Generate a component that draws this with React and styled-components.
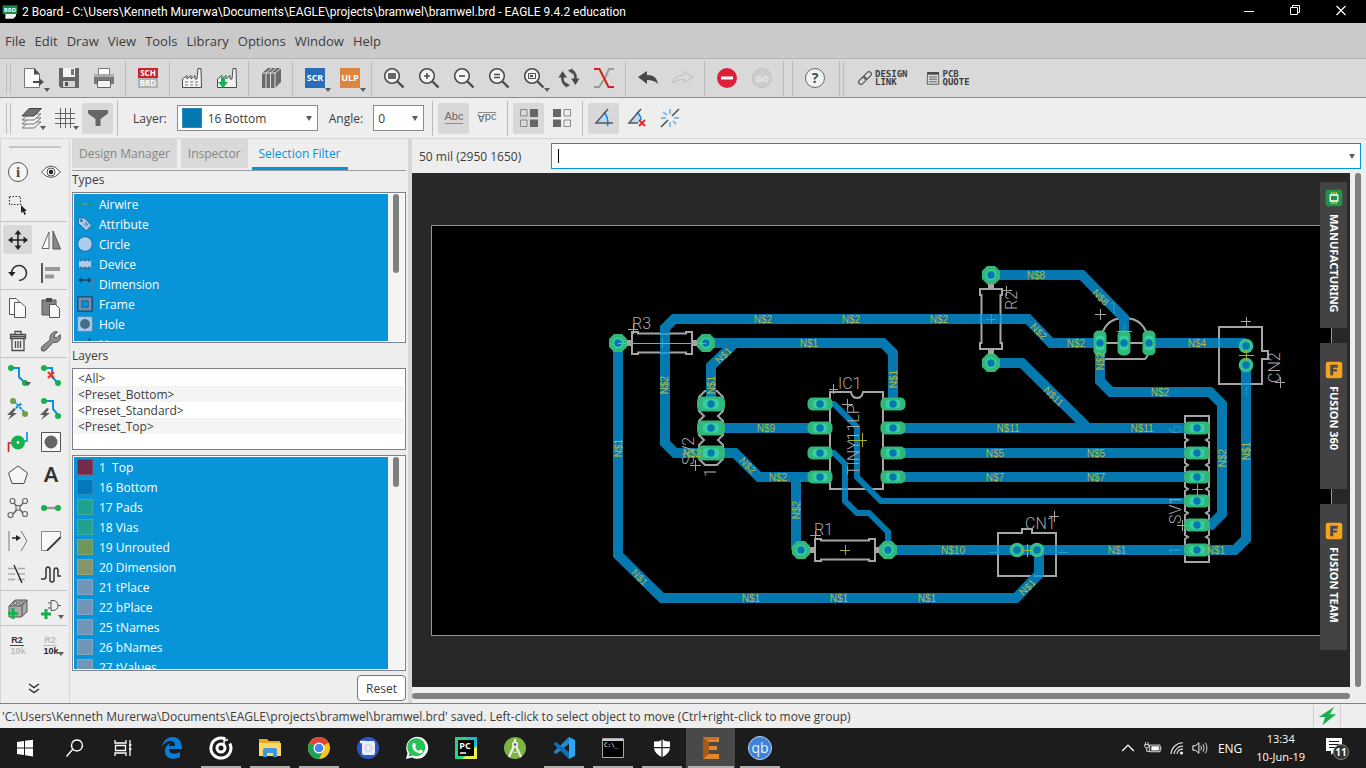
import React, { useState } from 'react'
import styled, { createGlobalStyle, css } from 'styled-components'

const GlobalStyle = createGlobalStyle`
    * {
        box-sizing: border-box;
    }

    body {
        margin: 0;
        overflow: hidden;
        font-family: "Open Sans", "Noto Sans", sans-serif;
        font-size: 12px;
        color: #3c3c3c;
    }

    button, input, select {
        font: inherit;
        color: inherit;
    }
`;

const Window = styled.div`
    display: flex;
    flex-direction: column;
    height: 100vh;
    background-color: #eeeeee;
`;

const TitleBar = styled.header`
    display: flex;
    align-items: center;
    flex: 0 0 23px;
    padding: 0 2px;
    background-color: #000;
    color: #fff;

    h1 {
        flex: 1;
        margin: 0 0 0 4px;
        font-family: Roboto, sans-serif;
        font-size: 12px;
        font-weight: 400;
        line-height: 16px;
    }
`;

const CaptionButton = styled.button`
    display: flex;
    align-items: center;
    justify-content: center;
    width: 46px;
    height: 23px;
    padding: 0 0 3px;
    border: 0;
    background: none;
`;

const MenuBar = styled.nav`
    display: flex;
    align-items: center;
    gap: 9px;
    flex: 0 0 36px;
    padding-left: 5px;
    background-color: #cacaca;
    border-bottom: 1px solid #b4b4b4;

    button {
        padding: 0;
        border: 0;
        background: none;
        font-size: 13px;
        line-height: 20px;
    }
`;

const ToolBar = styled.div`
    display: flex;
    align-items: center;
    flex: 0 0 ${({ $light }) => ($light ? '41px' : '39px')};
    padding-left: 6px;
    background-color: ${({ $light }) => ($light ? '#eeeeee' : '#d9d9d9')};
    border-bottom: 1px solid ${({ $light }) => ($light ? '#d6d6d6' : '#8c8c8c')};
`;

const Grip = styled.span`
    width: 5px;
    height: 31px;
    margin-right: 5px;
    border: solid #bdbdbd;
    border-width: 0 1px;
`;

const Divider = styled.span`
    width: 1px;
    height: 35px;
    margin: 0 ${({ $gap }) => $gap || '4px'};
    background-color: #bbbbbb;
`;

const ToolButton = styled.button`
    position: relative;
    display: flex;
    align-items: center;
    justify-content: center;
    flex: none;
    width: ${({ $size }) => $size || '35px'};
    height: ${({ $size }) => $size || '35px'};
    padding: 0;
    border: 0;
    border-radius: 2px;
    background: none;

    ${({ $on }) => $on && css`
        background-color: #d8d8d8;
    `}

    ${({ $menu }) => $menu && css`
        &::after {
            content: "";
            position: absolute;
            right: 1px;
            bottom: 4px;
            border: solid transparent;
            border-width: 4px 3px 0;
            border-top-color: #5c5c5c;
        }
    `}
`;

const Narrow = styled.div`
    display: flex;
    justify-content: center;
    gap: 2px;
`;

const LinkButton = styled.button`
    display: flex;
    align-items: center;
    gap: 2px;
    margin: 0 7px 0 10px;
    padding: 0;
    border: 0;
    background: none;
    text-align: left;
    font: 700 9px/8px "DejaVu Sans Mono", monospace;
    white-space: pre;
`;

const Field = styled.label`
    margin: 0 10px 0 11px;
`;

const SelectBox = styled.div`
    position: relative;
    display: flex;
    align-items: center;
    gap: 6px;
    width: ${({ $width }) => $width};
    height: 26px;
    padding-left: 4px;
    background-color: #fff;
    border: 1px solid #8a8a8a;

    select {
        flex: 1;
        min-width: 0;
        height: 24px;
        padding: 0 2px 0 0;
        border: 0;
        background: none;
        appearance: none;
        outline: 0;
    }

    &::after {
        content: "";
        position: absolute;
        right: 5px;
        top: 10px;
        border: solid transparent;
        border-width: 5px 3px 0;
        border-top-color: #5c5c5c;
    }
`;

const Swatch = styled.span`
    flex: none;
    width: ${({ $size }) => $size || '16px'};
    height: ${({ $size }) => $size || '16px'};
    background-color: ${({ $color }) => $color};
    box-shadow: inset 0 0 0 1px rgba(255, 255, 255, .15);
`;

const Workspace = styled.main`
    display: flex;
    flex: 1;
    min-height: 0;
`;

const Rail = styled.aside`
    display: flex;
    flex-direction: column;
    align-items: stretch;
    flex: 0 0 70px;
    padding: 7px 2px 0 0;
    border: solid #d6d6d6;
    border-width: 0 1px;
`;

const RailGrip = styled.span`
    height: 5px;
    margin: 0 6px 7px 8px;
    border: solid #c4c4c4;
    border-width: 1px 0;
`;

const RailGroup = styled.div`
    display: grid;
    grid-template-columns: 33px 33px;
    grid-auto-rows: 33px;
    place-items: center;
    margin-bottom: ${({ $last }) => ($last ? '0' : '1px')};
    border-bottom: ${({ $last }) => ($last ? '0' : '1px solid #c4c4c4')};
    padding-top: ${({ $last }) => ($last ? '2px' : '0')};
`;

const Panel = styled.section`
    display: flex;
    flex-direction: column;
    flex: 0 0 338px;
    padding: 0 2px 2px;

    h2 {
        flex: none;
        height: 21px;
        margin: 0;
        font-size: 12px;
        font-weight: 400;
        line-height: 18px;
    }
`;

const Tabs = styled.div`
    display: flex;
    gap: 4px;
    flex: 0 0 31px;
    border-bottom: 1px solid #9b9b9b;
`;

const Tab = styled.button`
    height: ${({ $active }) => ($active ? '31px' : '29px')};
    padding: 0 7px;
    border: 0;
    background-color: ${({ $active }) => ($active ? 'transparent' : '#d9d9d9')};
    border-bottom: ${({ $active }) => ($active ? '3px solid #0794d8' : '0')};
    color: ${({ $active }) => ($active ? '#0794d8' : '#858585')};
`;

const ListBox = styled.div`
    display: flex;
    flex: ${({ $height }) => ($height ? `0 0 ${$height}` : '1')};
    min-height: 0;
    margin-bottom: ${({ $gap }) => $gap || '4px'};
    padding: 1px;
    background-color: #fff;
    border: 1px solid #7d8090;
    overflow: hidden;

    ul {
        flex: 1;
        margin: 0;
        padding: 0;
        list-style: none;
        overflow: hidden;
    }
`;

const SelectedRow = styled.li`
    display: flex;
    align-items: center;
    gap: 6px;
    height: 20px;
    padding-left: 3px;
    background-color: #0794d8;
    color: #fff;
    white-space: pre;
`;

const PresetRow = styled.li`
    height: 16px;
    padding-left: 4px;
    line-height: 17px;

    &:nth-child(even) {
        background-color: #f4f4f4;
    }
`;

const ListScroll = styled.div`
    width: 16px;
    padding-left: 5px;
    background-color: #f4f4f4;

    span {
        display: block;
        width: 6px;
        height: ${({ $thumb }) => $thumb};
        border-radius: 3px;
        background-color: #808080;
    }
`;

const ResetButton = styled.button`
    align-self: flex-end;
    flex: 0 0 26px;
    width: 49px;
    padding: 0;
    background-color: #fff;
    border: 1px solid #777;
    border-radius: 4px;
`;

const Splitter = styled.div`
    flex: 0 0 4px;
    background-color: #d8d8d8;
`;

const Editor = styled.section`
    display: grid;
    grid-template-columns: 1fr 16px;
    grid-template-rows: 34px 1fr 16px;
    flex: 1;
    min-width: 0;
`;

const CommandRow = styled.div`
    grid-column: 1 / 3;
    display: flex;
    align-items: center;
    gap: 26px;
    padding: 0 5px 0 7px;

    label {
        flex: 0 0 106px;
    }
`;

const CommandBox = styled.div`
    position: relative;
    flex: 1;

    input {
        display: block;
        width: 100%;
        height: 26px;
        padding: 0 20px 0 6px;
        background-color: #fff;
        border: 1px solid #0794d8;
        outline: 0;
    }

    &::before {
        content: "";
        position: absolute;
        left: 7px;
        top: 6px;
        width: 1px;
        height: 14px;
        background-color: #000;
    }

    &::after {
        content: "";
        position: absolute;
        right: 6px;
        top: 11px;
        border: solid transparent;
        border-width: 5px 3px 0;
        border-top-color: #5c5c5c;
    }
`;

const Canvas = styled.div`
    position: relative;
    min-height: 0;
    background-color: #282828;
    overflow: hidden;

    > svg {
        display: block;
        width: 100%;
        height: 100%;
    }
`;

const SideTabs = styled.div`
    position: absolute;
    top: 9px;
    right: 3px;
    display: flex;
    flex-direction: column;
    gap: 15px;
`;

const SideTab = styled.button`
    display: flex;
    flex-direction: column;
    align-items: center;
    gap: 7px;
    width: 27px;
    height: 146px;
    padding: ${({ $top }) => $top} 0 0;
    border: 0;
    background-color: #434343;
    color: #fff;

    span {
        writing-mode: vertical-rl;
        font-family: "Noto Sans", sans-serif;
        font-size: 11px;
        font-weight: 700;
        line-height: 16px;
        white-space: nowrap;
    }
`;

const ScrollTrack = styled.div`
    padding: ${({ $vertical }) => ($vertical ? '0 0 0 5px' : '6px 0 0')};

    span {
        display: block;
        width: ${({ $vertical }) => ($vertical ? '6px' : '100%')};
        height: ${({ $vertical }) => ($vertical ? '100%' : '6px')};
        border-radius: 3px;
        background-color: #808080;
    }
`;

const StatusBar = styled.footer`
    display: flex;
    align-items: center;
    justify-content: space-between;
    flex: 0 0 25px;
    padding: 0 25px 0 2px;
    border-top: 1px solid #808080;

    .connection {
        display: flex;
        padding: 0 2px;
        border: solid #d0d0d0;
        border-width: 0 1px;
    }
`;

const TaskBar = styled.div`
    display: flex;
    flex: 0 0 40px;
    background-color: #1c1c1c;
    color: #fff;
`;

const TaskButton = styled.button`
    display: flex;
    align-items: center;
    justify-content: center;
    width: 49px;
    padding: 0;
    border: 0;
    background: linear-gradient(#b0b0b0, #b0b0b0) no-repeat center bottom / ${({ $open }) => ($open ? '40px' : '0')} 2px;

    ${({ $active }) => $active && css`
        background: linear-gradient(#b0b0b0, #b0b0b0) no-repeat center bottom / 46px 2px, #494949;
    `}
`;

const Tray = styled.div`
    display: flex;
    align-items: center;
    gap: 5px;
    margin-left: auto;
    padding-right: 17px;

    .clock {
        margin: 0 15px 0 9px;
        font-size: 11px;
        line-height: 18px;
        text-align: center;
    }

    .lang {
        margin-left: 4px;
    }
`;

const D = '#4b4b4b';
const G = '#17b04f';
const B = '#0a8ee0';

const lens = <><circle cx="10" cy="10" r="7.3" fill="#f4f4f4" stroke={D} strokeWidth="1.6" /><path d="M15.5 15.5L21.5 21.5" stroke={D} strokeWidth="2.4" /></>;
const bolt = <path d="M8 11L1 18H5L2 23L11 16H7L10 12Z" fill="#5c5c5c" />;
const factory = <path d="M2.5 21.5V13L7 9.5V13L11 9.5V13L15 9.5V13H17L18 2.5H21L21.5 21.5Z" fill="#f4f4f4" stroke={D} />;

const icons = {
    open: <><path d="M2.5 2.5H12.5L17.5 8V21.5H2.5Z" fill="#fafafa" stroke="#777" /><path d="M12 2L18 8.500H12Z" fill={D} /><path d="M11 16H18" stroke={D} strokeWidth="2" /><path d="M17 12L22 16L17 20Z" fill={D} /></>,
    save: <><path d="M2 2H22V22H4L2 20Z" fill="#666" /><path d="M6 2H18V11H6Z" fill="#f2f2f2" /><path d="M14 3H17V9H14Z" fill="#777" /><path d="M6 15H18V21H6Z" fill="#d4d4d4" /><path d="M8 16H11V20H8Z" fill="#555" /></>,
    print: <><path d="M6.500 2.500H17.500V9H6.500Z" fill="#fff" stroke="#777" /><path d="M2 8H22V18H2Z" fill="#777" /><path d="M2 8H22V11H2Z" fill="#aaa" /><path d="M5.500 14.500H18.500V21.500H5.500Z" fill="#f4f4f4" stroke="#666" /></>,
    board: <><path d="M2 2H22V12H2Z" fill="#cc2229" /><path d="M2 12H22V22H2Z" fill="#b2b2b2" /><g fill="#fff" fontSize="8" fontWeight="700" textAnchor="middle"><text x="12" y="10">SCH</text><text x="12" y="20">BRD</text></g></>,
    fab: <>{factory}<path d="M5 16H18M5 19H18" stroke="#777" strokeDasharray="3 2" /></>,
    fabDown: <>{factory}<path d="M6 12H10V16H13L8 22L3 16H6Z" fill={G} /></>,
    library: <><path d="M3 7L9 2H22V16L16 22H3Z" fill="#6a6a6a" /><path d="M3 7H16V22M7 7L13 2M11.500 7L17 2M16 7L22 2M7 7V22M11.500 7V22" stroke="#ddd" fill="none" /></>,
    scr: <><path d="M2 2H22V22H2Z" fill="#2a6ebb" /><text x="12" y="15" fill="#fff" fontSize="9" fontWeight="700" textAnchor="middle">SCR</text></>,
    ulp: <><path d="M2 2H22V22H2Z" fill="#dd8441" /><text x="12" y="15" fill="#fff" fontSize="9" fontWeight="700" textAnchor="middle">ULP</text></>,
    fit: <>{lens}<path d="M6 7H14V13H6Z" fill="#666" /></>,
    zoomIn: <>{lens}<path d="M7 10H13M10 7V13" stroke={D} strokeWidth="1.600" /></>,
    zoomOut: <>{lens}<path d="M7 10H13" stroke={D} strokeWidth="1.600" /></>,
    redraw: <>{lens}<path d="M7 8.500H13M7 11.500H13" stroke={D} strokeWidth="1.500" /></>,
    zoomSel: <>{lens}<path d="M6.500 7.500H13.500V12.500H6.500Z" fill="none" stroke={D} /><path d="M8 9H11V11H8Z" fill={D} /></>,
    cycle: <><path d="M9 19Q5 17 5.500 10M15 5Q19 7 18.500 14" fill="none" stroke={D} strokeWidth="2.600" /><path d="M1.500 11.500L5.500 5L10 11.500ZM14 12.500H22.500L18.500 19ZM11 4.500L15.500 2.500V8ZM13 19.500L8.500 21.500V16Z" fill={D} /></>,
    cross: <><path d="M22 3H17L13 12L7 21H2" fill="none" stroke="#9a9a9a" strokeWidth="2" /><path d="M2 3H7.500L16.500 21H22" fill="none" stroke="#d42020" strokeWidth="2" /></>,
    undo: <path d="M2 11L11 5V9C18 9 21 12 22 18C19 15 16 14 11 14V18Z" fill="#484848" />,
    redo: <path d="M22 11L13 5.500V9C6 9 3 12 2 17C5 14.500 8 13.500 13 13.500V17Z" fill="none" stroke="#bcbcbc" />,
    stop: <><circle cx="12" cy="12" r="10" fill="#dc1f3c" /><path d="M6 12H18" stroke="#fff" strokeWidth="3" /></>,
    go: <><circle cx="12" cy="12" r="9.500" fill="#cdcdcd" stroke="#c2c2c2" /><text x="12" y="15.500" fill="#e8e8e8" fontSize="9" fontWeight="700" textAnchor="middle">GO</text></>,
    help: <><circle cx="12" cy="12" r="9.500" fill="#f2f2f2" stroke="#666" /><text x="12" y="17" fill={D} fontSize="14" fontWeight="700" textAnchor="middle">?</text></>,
    chain: <g fill="none" stroke="#555" strokeWidth="1.800" transform="rotate(-45 12 12)"><rect x="0" y="8.500" width="13" height="7" rx="3.500" /><rect x="11" y="8.500" width="13" height="7" rx="3.500" /></g>,
    quote: <><path d="M3 3H21V7H3Z" fill={D} /><path d="M3.500 7V21.500H20.500V7M6 10.500H18M6 14H18M6 17.500H18" fill="none" stroke="#666" strokeWidth="1.600" /></>,
    layers: <><g fill="#f2f2f2" stroke="#777"><path d="M2 22L9 16H21L14 22Z" /><path d="M2 18L9 12H21L14 18Z" /><path d="M2 14L9 8H21L14 14Z" /></g><path d="M2 10L9 2.500H21.500L14 10Z" fill="#707070" stroke="#444" /></>,
    grid: <path d="M7.500 2V22M12.500 2V22M17.500 2V22M2 7.500H22M2 12.500H22M2 17.500H22" stroke="#666" />,
    filter: <path d="M2 4H22V7.500L14.500 13V20H9.500V13L2 7.500Z" fill="#666" />,
    abc: <><text x="12" y="14" fontSize="11" fill="#6a6a6a" textAnchor="middle" fontFamily="Liberation Sans, sans-serif">Abc</text><path d="M3 17.500H21" stroke="#888" /></>,
    abcFlip: <><text transform="translate(12 8) scale(1 -1)" fontSize="11" fill="#6a6a6a" textAnchor="middle" fontFamily="Liberation Sans, sans-serif">Abc</text><path d="M3 6.500H21" stroke="#888" /></>,
    quadRight: <><path d="M3.500 3.500H10V10H3.500ZM3.500 14H10V20.500H3.500Z" fill="none" stroke="#888" /><path d="M13 3H21V11H13ZM13 13.500H21V21H13Z" fill="#666" /></>,
    quadLeft: <><path d="M14 3.500H20.500V10H14ZM14 14H20.500V20.500H14Z" fill="none" stroke="#888" /><path d="M3 3H11V11H3ZM3 13.500H11V21H3Z" fill="#666" /></>,
    angle: <><path d="M4 17L13 7Q17 12 16 17Z" fill="#b8dcf5" /><path d="M12 6Q17 12 15.500 20" fill="none" stroke={B} strokeWidth="1.600" /><path d="M16 3L4 17H21" fill="none" stroke="#555" strokeWidth="1.500" /></>,
    angleOff: <><path d="M4 17L13 7Q17 12 16 17Z" fill="#b8dcf5" /><path d="M12 6Q16 10 16 14" fill="none" stroke={B} strokeWidth="1.600" /><path d="M16 3L4 17H13" fill="none" stroke="#555" strokeWidth="1.500" /><path d="M14 14L20 20M20 14L14 20" stroke="#e22" strokeWidth="1.800" /></>,
    snap: <><path d="M12 3V8M12 16V21M3 12H8M16 12H21M5 6L9 9M15 15L18 18" stroke="#7cbcec" strokeWidth="1.800" /><path d="M3 21L10 14M14 10L21 3" stroke="#555" strokeWidth="1.600" /></>,

    info: <><circle cx="12" cy="12" r="9.500" fill="#f6f6f6" stroke="#555" /><text x="12" y="17" fontSize="15" fontWeight="700" fill={D} textAnchor="middle" fontFamily="Liberation Serif, serif">i</text></>,
    eye: <><path d="M2.500 12Q12 0 21.500 12Q12 23 2.500 12Z" fill="#f8f8f8" stroke="#555" /><circle cx="12" cy="12" r="4" fill="none" stroke="#555" /><circle cx="12" cy="12" r="2.200" fill="#222" /></>,
    group: <><path d="M3.500 3.500H14.500V11.500H3.500Z" fill="none" stroke="#333" strokeWidth="1.200" strokeDasharray="1.500 1.500" /><path d="M15 12V20L17 18.500L18.500 22L20 21L18.500 18H21Z" fill="#222" /></>,
    move: <><path d="M12 4V20M4 12H20" stroke="#222" strokeWidth="1.600" /><path d="M12 2L15.500 6.500H8.500ZM12 22L15.500 17.500H8.500ZM2 12L6.500 8.500V15.500ZM22 12L17.500 8.500V15.500Z" fill="#222" /></>,
    mirror: <><path d="M10 4V20.500H3Z" fill="#fafafa" stroke="#666" /><path d="M14 3L21.500 21H14Z" fill="#888" stroke="#555" /></>,
    rotate: <><path d="M13 19.500A7.500 7.500 0 1 0 5.500 12" fill="none" stroke="#333" strokeWidth="1.600" /><path d="M2 11H9.500L6 15.500Z" fill="#222" /></>,
    align: <><path d="M3 2V22" stroke="#333" strokeWidth="1.600" /><path d="M6 6H21V10H6ZM6 13.500H15V17.500H6Z" fill="#999" /></>,
    copy: <g fill="#fafafa" stroke="#555"><path d="M3.500 2.500H10L14 6.500V18.500H3.500Z" /><path d="M8.500 6.500H15L19.500 11V21.500H8.500Z" /></g>,
    paste: <><path d="M3 4H17V19H3Z" fill="#858585" stroke="#555" /><path d="M7 2H13V6H7Z" fill={D} /><path d="M10.500 8.500H16.500L20.500 12.500V21.500H10.500Z" fill="#fafafa" stroke="#555" /></>,
    trash: <path d="M4.500 7.500H19.500M6 9.500V21.500H18V9.500M4.500 5.500H19.500V9.500H4.500ZM9 5V2.500H15V5M9.500 12V19M12 12V19M14.500 12V19" fill="none" stroke={D} strokeWidth="1.300" />,
    wrench: <path d="M2.500 21.500Q1.500 19 3.500 17L11 11Q10 5 16 2.500L18.500 3L15.500 6V8.500H18L21 5.500Q23 11 17.500 13.500H14L7 21Q5 23 2.500 21.500Z" fill="#8d8d8d" stroke="#555" />,
    route: <><path d="M5 4H13V13L19 19" fill="none" stroke={B} strokeWidth="2" /><circle cx="5" cy="4" r="3" fill={G} /><circle cx="19" cy="19" r="3" fill={G} /></>,
    ripup: <><path d="M5 4H13V13L19 19" fill="none" stroke={B} strokeWidth="2" /><circle cx="5" cy="4" r="3" fill={G} /><circle cx="19" cy="19" r="3" fill={G} /><path d="M9 8L15 14M15 8L9 14" stroke="#e33" strokeWidth="2.400" /></>,
    fanout: <>{bolt}<path d="M8 4L19 16M10 11L16 6" stroke={B} strokeWidth="2" strokeDasharray="3 1" /><circle cx="7" cy="4" r="3" fill="#6fa044" /><circle cx="19" cy="17" r="3" fill="#6fa044" /></>,
    autoroute: <>{bolt}<path d="M5 4H14V12L19 18" fill="none" stroke={B} strokeWidth="2" /><circle cx="5" cy="4" r="3" fill={G} /><circle cx="19" cy="19" r="3" fill={G} /></>,
    via: <><path d="M2.500 22V13H7" fill="none" stroke="#c22" strokeWidth="1.600" /><path d="M21 2V11H17" fill="none" stroke={B} strokeWidth="1.600" /><circle cx="12" cy="12.500" r="4.200" fill="none" stroke={G} strokeWidth="5.500" /></>,
    hole: <><path d="M2.500 2.500H21.500V21.500H2.500Z" fill="#fafafa" stroke="#555" /><circle cx="12" cy="12" r="6.500" fill="#666" /></>,
    polygon: <path d="M12 3L21.500 10L18 20.500H6L2.500 10Z" fill="#f6f6f6" stroke={D} />,
    text: <text x="12" y="19" fontSize="20" fontWeight="900" fill="#333" textAnchor="middle" fontFamily="Lato, sans-serif">A</text>,
    star: <g fill="none" stroke="#666"><path d="M7 6L17 17M18 6L7 18" strokeWidth="1.600" /><path d="M10 9.500H14V14H10Z" fill="#ddd" /><g fill="#f4f4f4" strokeWidth="1.200"><circle cx="6.500" cy="5" r="2.500" /><circle cx="19" cy="5" r="2.500" /><circle cx="4.500" cy="19" r="2.500" /><circle cx="19" cy="18" r="2.500" /></g></g>,
    airwire: <><path d="M5 12H19" stroke="#999" strokeWidth="2.500" /><circle cx="5" cy="12" r="3" fill={G} /><circle cx="19" cy="12" r="3" fill={G} /></>,
    slice: <><path d="M3 2V22M15 2L21 12L15 22" fill="none" stroke="#777" /><path d="M6 9H11" stroke="#222" strokeWidth="1.500" /><path d="M10 6L15 9L10 12Z" fill="#222" /></>,
    miter: <><path d="M2.500 2.500H21.500V10L9 21.500H2.500Z" fill="#f8f8f8" stroke="#888" /><path d="M21.500 8L8 21.500" stroke="#222" strokeWidth="1.500" /></>,
    ratsnest: <><path d="M2 6.500H22M2 12H22M2 17.500H22" stroke="#aaa" strokeWidth="1.500" strokeDasharray="7 3" /><path d="M8 3L16 21" stroke="#222" strokeWidth="1.300" /></>,
    meander: <path d="M2 17H5Q7 17 7 14V8Q7 5 9 5Q11 5 11 8V18Q11 20 13 20Q15 20 15 18V9Q15 6 17 6Q19 6 19 9V14H22" fill="none" stroke="#333" strokeWidth="1.500" />,
    addPart: <><path d="M3 9L9 3H21V15L15 20H3Z" fill="#aaa" stroke="#555" /><path d="M3 9H16V20M16 9L21 3" fill="none" stroke="#555" /><ellipse cx="9" cy="6" rx="2" ry="1.300" fill="#eee" stroke="#555" /><ellipse cx="15" cy="6" rx="2" ry="1.300" fill="#eee" stroke="#555" /><path d="M7 11V22M2 16.500H12" stroke={G} strokeWidth="3" /></>,
    addGate: <><path d="M12 3.500V13.500H14Q19 13 19 8.500Q19 4 14 3.500ZM9 6H12M9 11H12M19 8.500H22" fill="none" stroke="#555" /><path d="M7 12V22M2 17H12" stroke={G} strokeWidth="3" /></>,
    name: <g fontSize="9" fontWeight="700" textAnchor="middle" fontFamily="Liberation Sans, sans-serif"><text x="11" y="9" fill="#333">R2</text><path d="M4 11.500H18" stroke="#444" /><text x="12" y="20" fill="#bbb">10k</text></g>,
    value: <g fontSize="9" fontWeight="700" textAnchor="middle" fontFamily="Liberation Sans, sans-serif"><text x="11" y="9" fill="#bbb">R2</text><path d="M4 11.500H18" stroke="#bbb" /><text x="12" y="20" fill="#222">10k</text></g>,
    more: <path d="M7 7L12 10.500L17 7M7 12L12 15.500L17 12" fill="none" stroke="#333" strokeWidth="1.500" />,

    tAirwire: <><path d="M4 12H20" stroke="#6e91a8" strokeWidth="2" /><circle cx="4" cy="12" r="3.500" fill="#0f9a80" /><circle cx="20" cy="12" r="3.500" fill="#0f9a80" /></>,
    tAttribute: <><path d="M2 3H11L22 14L14 22L2 11Z" fill="#a9cdeb" stroke="#2c6896" strokeWidth="1.500" /><circle cx="6.500" cy="7" r="2" fill="#2c6896" /><path d="M10 11L15 16M12 9L17 14" stroke="#2c6896" strokeWidth="1.500" /></>,
    tCircle: <circle cx="12" cy="12" r="11" fill="#a9cdeb" stroke="#22679b" strokeWidth="1.500" />,
    tDevice: <><path d="M3 7H21V17H3Z" fill="#a9cdeb" /><path d="M6 4V8M12 4V8M18 4V8M6 16V20M12 16V20M18 16V20" stroke="#456c8b" strokeWidth="3" /></>,
    tDimension: <><path d="M1 1V23M23 1V23" stroke="#4f83a8" strokeWidth="1.500" /><path d="M4 6H20M7 3L3.500 6L7 9M17 3L20.500 6L17 9" fill="none" stroke="#1b4261" strokeWidth="2" /></>,
    tFrame: <><path d="M4 4H20V20H4Z" fill="none" stroke="#1d4568" strokeWidth="7.500" /><path d="M4.500 4.500H19.500V19.500H4.500Z" fill="none" stroke="#6d8fb0" strokeWidth="4.500" /></>,
    tHole: <><path d="M1 1H23V23H1Z" fill="#a9cdeb" stroke="#4f83a8" /><circle cx="12" cy="12" r="7.500" fill="#456c8b" /></>,
    tLine: <path d="M4 22L20 4" stroke="#1b4261" strokeWidth="2" />,

    chip: <><rect x="1" y="1" width="22" height="22" rx="3" fill="#23924d" /><path d="M9 4V20M12 4V20M15 4V20" stroke="#d8d829" strokeWidth="1.500" /><path d="M7 8H17V16H7Z" fill="#23924d" stroke="#fff" strokeWidth="1.800" /></>,
    fusion: <><rect x="1" y="1" width="22" height="22" rx="3" fill="#f6a31f" /><path d="M7 5H17V9H11V11H16V14H11V19H7Z" fill="#4a4a4a" /></>,
    power: <path d="M20 2L3 13H10L7 22L22 10H15Z" fill={G} />,

    start: <path d="M4 6L11 5V11.500H4ZM12 4.800L20 3.700V11.500H12ZM4 12.500H11V19L4 18ZM12 12.500H20V20.500L12 19.300Z" fill="#fff" />,
    search: <path d="M10.500 13.500L4.500 20.500M15 4A5.500 5.500 0 1 1 14.900 4Z" fill="none" stroke="#fff" strokeWidth="1.300" />,
    taskview: <path d="M4 4V7H15V4M4 20V17H15V20M4.500 9.500H14.500V14.500H4.500ZM19 4V20M18 9H20.500M18 13H20.500" fill="none" stroke="#fff" strokeWidth="1.300" />,
    edge: <path d="M2 11C3 4 8 1 13 1C19 1 22 6 22 13H9C9 18 15 19 20 16V21C12 25 4 22 5 14C5 11 8 8 11 7C9 9 9 9 9 10H15C15 6 13 5 10 5C7 5 4 7 2 11Z" fill="#0b7bd8" />,
    groove: <><path d="M16.500 3.200A10 10 0 1 0 20.800 7.500" fill="none" stroke="#fff" strokeWidth="3" /><circle cx="12" cy="12" r="4" fill="none" stroke="#fff" strokeWidth="3" /><path d="M15 11V5L19 3.500" fill="none" stroke="#fff" strokeWidth="1.500" /></>,
    folder: <><path d="M1 3H9L11 5H22V20H1Z" fill="#e8a820" /><path d="M1 7H23V20H1Z" fill="#ffd766" /><path d="M5 21V14Q5 12 7 12H17Q19 12 19 14V21H15V17H9V21Z" fill="#3d98dc" /></>,
    chrome: <><circle cx="12" cy="12" r="11" fill="#fbc61c" /><path d="M12 12L2.500 6.500A11 11 0 0 1 21.500 6.500Z" fill="#dc4437" /><path d="M12 12L2.500 6.500A11 11 0 0 0 12 23L17 13Z" fill="#1ba15f" /><circle cx="12" cy="12" r="5.500" fill="#fff" /><circle cx="12" cy="12" r="4.300" fill="#4285f4" /></>,
    signal: <><circle cx="12" cy="12" r="11" fill="#2f55c0" /><rect x="6" y="5" width="13" height="14" rx="2" fill="#e9edf5" /><path d="M4 6H10" stroke="#e9edf5" strokeWidth="2.500" /><circle cx="12.500" cy="12" r="3.300" fill="none" stroke="#c4c8cf" /></>,
    whatsapp: <><path d="M1 23L2.500 17A11 11 0 1 1 7 21.500Z" fill="#fff" /><path d="M3.500 20.500L4.500 17A9 9 0 1 1 8 19.500Z" fill="#25c256" /><path d="M8 7L10 7L11 10L10 11.500Q11.500 14 14 15L15.500 13.500L18 15Q17.500 18 14.500 17.500Q8 15.500 7 10Z" fill="#fff" /></>,
    pycharm: <><path d="M1 1H23V23H1Z" fill="#21d789" /><path d="M12 1H23V14Z" fill="#1bb7d8" /><path d="M23 10V23H8Z" fill="#eef04a" /><path d="M4 4H20V20H4Z" fill="#000" /><text x="11" y="13" fontSize="9" fontWeight="700" fill="#fff" textAnchor="middle">PC</text><path d="M6 17H12" stroke="#fff" strokeWidth="1.500" /></>,
    android: <><circle cx="12" cy="12" r="11" fill="#7cb342" /><path d="M11 10L6 21M13 10L18 21" stroke="#f2f2f2" strokeWidth="2" /><path d="M7 15Q12 18 17 15" fill="none" stroke="#d8e8c4" /><circle cx="12" cy="8.500" r="3" fill="#f2f2f2" /><path d="M12 3V6" stroke="#f2f2f2" strokeWidth="2" /><circle cx="12" cy="8.500" r="1.300" fill="#555" /></>,
    vscode: <><path d="M17 1L23 4V20L17 23Z" fill="#2ba7f5" /><path d="M17 1V8L4 18L1.500 16L17 1Z" fill="#2489ca" /><path d="M17 23V16L4 6L1.500 8L17 23Z" fill="#1070b3" /></>,
    terminal: <><path d="M1.500 2.500H22.500V21.500H1.500Z" fill="#000" stroke="#aaa" /><path d="M2 3H22V5H2Z" fill="#ccc" /><text x="3" y="11" fontSize="6" fill="#fff" fontFamily="DejaVu Sans Mono, monospace">C:\_</text></>,
    shield: <path d="M12 3Q15 6 20 5.500V11H12.600V4ZM11.400 4V11H4V5.500Q9 6 11.400 4ZM4 12.300H11.400V21Q5 18 4 12.300ZM12.600 12.300H20Q19 18 12.600 21Z" fill="#fff" />,
    eagle: <><path d="M4 1H20V6H10V10H18V14H10V18H20V23H4Z" fill="#e0862c" /><path d="M4 1L10 6V18L4 23Z" fill="#a85a14" /><path d="M4 1H20L17 4H8Z" fill="#c97322" /></>,
    qb: <><circle cx="12" cy="12" r="11.500" fill="#3d82d6" stroke="#bcd8f4" /><text x="12" y="17" fontSize="14" fill="#e8f2fc" textAnchor="middle">qb</text></>,
    up: <path d="M5 15.500L12 8.500L19 15.500" fill="none" stroke="#fff" strokeWidth="1.600" />,
    battery: <><path d="M8 8.500H20.500V16.500H8Z" fill="none" stroke="#fff" /><path d="M10 10H19V15H10ZM21 11H22V14H21Z" fill="#fff" /><path d="M3 5V8M6 5V8M2 8H7V10L5.500 12H3.500L2 10ZM4.500 12V16H8" fill="none" stroke="#fff" /></>,
    wifi: <><path d="M4 20A16 16 0 0 1 20 5M8 20A12 12 0 0 1 20 9.500M12 20A8 8 0 0 1 20 13.500" fill="none" stroke="#ddd" strokeWidth="1.500" /><circle cx="18" cy="18.500" r="2" fill="#fff" /></>,
    sound: <><path d="M2.500 9H6L10.500 5V19L6 15H2.500Z" fill="none" stroke="#fff" strokeWidth="1.300" /><path d="M13 9Q15 12 13 15M16 7Q19 12 16 17M19 5Q23.500 12 19 19" fill="none" stroke="#ddd" strokeWidth="1.300" /></>,
    notes: <><path d="M1 2H17V15H10L6 19V15H1Z" fill="#fff" /><path d="M4 5.500H14M4 8.500H14M4 11.500H11" stroke="#1c1c1c" /><circle cx="16" cy="16" r="7.500" fill="#333" stroke="#888" /><text x="16" y="20" fontSize="10" fontWeight="700" fill="#fff" textAnchor="middle">11</text></>,
    brd: <><path d="M5 3H21V18L17 22H5Z" fill="#eee" /><path d="M1 2H23V15H1Z" fill="#1e8a42" /><text x="12" y="12" fontSize="9" fontWeight="700" fill="#fff" textAnchor="middle">BRD</text></>,
    min: <path d="M7 13.500H17" stroke="#fff" />,
    restore: <path d="M7.500 9.500H14.500V16.500H7.500ZM9.500 9.500V7.500H16.500V14.500H14.500" fill="none" stroke="#fff" />,
    close: <path d="M7.500 8L16.500 17M16.500 8L7.500 17" stroke="#fff" strokeWidth="1.200" />,
};

const Icon = ({ name, size = 24 }) => (
    <svg width={size} height={size} viewBox="0 0 24 24" overflow="visible" aria-hidden="true">{icons[name]}</svg>
);

const menus = ['File', 'Edit', 'Draw', 'View', 'Tools', 'Library', 'Options', 'Window', 'Help'];

// a trailing * marks a button that opens a menu
const mainTools = [
    ['open*', 'save', 'print'],
    ['board'],
    ['fab', 'fabDown'],
    ['library'],
    ['scr*', 'ulp*'],
    ['fit', 'zoomIn', 'zoomOut', 'redraw', 'zoomSel*', 'cycle', 'cross'],
    ['undo', 'redo'],
    ['stop', 'go'],
];

const railTools = [
    ['info', 'eye', 'group', ''],
    ['move', 'mirror', 'rotate', 'align'],
    ['copy', 'paste', 'trash', 'wrench'],
    ['route*', 'ripup', 'fanout', 'autoroute', 'via', 'hole', 'polygon', 'text', 'star', 'airwire', 'slice', 'miter', 'ratsnest', 'meander'],
    ['addPart', 'addGate*'],
    ['name', 'value*'],
];

const types = ['Airwire', 'Attribute', 'Circle', 'Device', 'Dimension', 'Frame', 'Hole', 'Line'];
const presets = ['<All>', '<Preset_Bottom>', '<Preset_Standard>', '<Preset_Top>'];
const layers = [
    ['1  Top', '#722b4b'],
    ['16 Bottom', '#0578bb'],
    ['17 Pads', '#22a092'],
    ['18 Vias', '#22a092'],
    ['19 Unrouted', '#6f965c'],
    ['20 Dimension', '#86946a'],
    ['21 tPlace', '#7095b6'],
    ['22 bPlace', '#7095b6'],
    ['25 tNames', '#7095b6'],
    ['26 bNames', '#7095b6'],
    ['27 tValues', '#7095b6'],
];

const tasks = [
    ['start'], ['search'], ['taskview'], ['edge'], ['groove', 'open'], ['folder', 'open'], ['chrome', 'open'],
    ['signal'], ['whatsapp'], ['pycharm'], ['android'], ['vscode', 'open'],
    ['terminal', 'open'], ['shield', 'open'], ['eagle', 'active'], ['qb', 'open'],
];

const tracks = [
    'M618 343V555L662 598H1016L1039 574V550',
    'M706 343H883L893 353V404',
    'M735 343L711 366V404',
    'M820 477H759L735 453H675L665 443V328L674 319H1028L1051 343H1100V381L1111 392H1210L1222 404V514L1211 525H1197',
    'M711 428H820',
    'M796 477V547L801 550',
    'M888 550H1235L1246 539V366',
    'M893 428H1197M893 453H1197M893 477H1197',
    'M991 275H1082L1124 318V343',
    'M991 363H1022L1088 428',
    'M1149 343H1246',
];

const thinTracks = [
    'M820 404H834L857 427V477L881 501H1197',
    'M820 453H834L845 464V501L857 513H869L888 532V550',
];

// text, centre x, centre y, rotation
const nets = [
    ['N$2', 763, 319], ['N$2', 851, 319], ['N$2', 939, 319], ['N$1', 809, 343], ['N$8', 1036, 275],
    ['N$2', 1076, 343], ['N$4', 1197, 343], ['N$2', 1160, 392], ['N$9', 766, 428], ['N$11', 1008, 428],
    ['N$11', 1142, 428], ['N$5', 995, 453], ['N$5', 1096, 453], ['N$7', 995, 477], ['N$7', 1096, 477],
    ['N$2', 778, 477], ['N$2', 692, 453], ['N$10', 953, 550], ['N$1', 1117, 550], ['N$1', 1216, 550],
    ['N$1', 751, 598], ['N$1', 839, 598], ['N$1', 927, 598],
    ['N$1', 618, 448, -90], ['N$2', 664, 385, -90], ['N$1', 711, 385, -90], ['N$1', 893, 379, -90],
    ['N$2', 796, 510, -90], ['N$2', 1100, 361, -90], ['N$2', 1222, 458, -90], ['N$1', 1246, 451, -90],
    ['N$1', 723, 355, -45], ['N$1', 1027, 587, -45], ['N$1', 640, 577, 45], ['N$2', 748, 465, 45],
    ['N$2', 1039, 331, 45], ['N$8', 1101, 297, 45], ['N$11', 1054, 396, 45],
];

const RoundPad = ({ x, y, r = 9 }) => (
    <g>
        <path d={`M${x - r} ${y - 4}l5 -5h8l5 5v8l-5 5h-8l-5 -5z`} fill="#33b67a" />
        <circle cx={x} cy={y} r="5.5" fill="#35cfa0" />
        <circle cx={x} cy={y} r="3.7" fill="#0578af" />
    </g>
);

const LongPad = ({ x, y, w = 25, h = 13 }) => (
    <g>
        <rect x={x - w / 2} y={y - h / 2} width={w} height={h} rx="5" fill="#33b67a" />
        <rect x={x - w / 4 - 1} y={y - h / 4 - 1} width={w / 2 + 2} height={h / 2 + 2} rx="3" fill="#35cfa0" />
        <circle cx={x} cy={y} r="3.7" fill="#0578af" />
    </g>
);

const Resistor = ({ x, y, rotate = 0 }) => (
    <g transform={`translate(${x} ${y}) rotate(${rotate})`} fill="none" stroke="#a5a5a5" strokeWidth="2">
        <path d="M-37 0H-31M31 0H37" strokeWidth="6" />
        <path d="M-30 -11H-24V-9.500H24V-11H30V11H24V9.500H-24V11H-30Z" />
    </g>
);

const Board = () => (
    <svg viewBox="412 173 938 514" preserveAspectRatio="xMinYMin slice">
        <path d="M431.500 225.500H1331.500V635.500H431.500Z" fill="#000" stroke="#b8963a" />
        <g fill="none" stroke="#a5a5a5" strokeWidth="2">
            <path d="M851 392H830V489H883V392H863Q862 398 857 398Q852 398 851 392Z" />
            <path d="M705 391H717L723 397V411L718 416L723 421V435L718 440L723 445V459L717 465H705L699 459V445L704 440L699 435V421L704 416L699 411V397Z" />
            <path d="M1185 416H1209V438L1206 440L1209 442V463L1206 465L1209 467V487L1206 489L1209 491V511L1206 513L1209 515V535L1206 537L1209 539V562H1185V539L1188 537L1185 535V515L1188 513L1185 511V491L1188 489L1185 487V467L1188 465L1185 463V442L1188 440L1185 438Z" />
            <path d="M1219 327H1262V351H1268V359H1262V384H1219Z" />
            <path d="M998 533H1022V529H1032V533H1056V576H998Z" />
            <path d="M1100 343Q1103 318 1124 318Q1146 318 1149 343Q1149 356 1145 359H1105Q1100 356 1100 343H1149" />
        </g>
        <Resistor x={662} y={343} />
        <Resistor x={845} y={550} />
        <Resistor x={991} y={319} rotate={90} />
        <g fill="none" stroke="#0578af">
            {tracks.map((d) => <path key={d} d={d} strokeWidth="10" />)}
            {thinTracks.map((d) => <path key={d} d={d} strokeWidth="6" />)}
        </g>
        <g fill="none" stroke="#2b9bd0" strokeWidth="2">
            <path d="M660 334H670M660 353H670M981 314V324M1001 314V324M842 489H848" />
            <path d="M1219 338V348M1241 384H1251M998 545V555M1056 545V555M1034 576H1044" />
            <path d="M662.500 338V348M986 319.500H996M991.500 314V324M1246.500 387V395M989 552.500H997M1059 552.500H1068M1124.500 325V334" strokeWidth="1" />
        </g>
        {[[618, 343], [706, 343], [801, 550], [888, 550], [991, 275], [991, 363]].map(([x, y]) => <RoundPad key={`${x}-${y}`} x={x} y={y} />)}
        {[404, 428, 453, 477].map((y) => <React.Fragment key={y}><LongPad x={820} y={y} /><LongPad x={893} y={y} /></React.Fragment>)}
        {[404, 428, 453].map((y) => <LongPad key={y} x={711} y={y} w={28} h={15} />)}
        {[428, 453, 477, 501, 525, 550].map((y) => <LongPad key={y} x={1197} y={y} w={26} />)}
        {[1100, 1124, 1149].map((x) => <LongPad key={x} x={x} y={343} w={13} h={25} />)}
        {[[1246, 346], [1246, 365], [1017, 550], [1037, 550]].map(([x, y]) => (
            <g key={`${x}-${y}`}><circle cx={x} cy={y} r="7.300" fill="#35c090" /><circle cx={x} cy={y} r="3.700" fill="#0578af" /></g>
        ))}
        <g fill="none" stroke="#a0b030">
            <path d="M618 343.500H706M840 550.500H850M845.500 545V555M848 440.500H867M862.500 433V447M1239 355.500H1254M1246.500 350V361M1022 550.500H1032M1027.500 544V557M1192 489.500H1203M1197.500 484V495M1117 331.500H1132" />
        </g>
        <g fill="none" stroke="#a5a5a5">
            <path d="M628 329.500H638M633.500 324V334M829 389.500H838M833.500 384V394M842 404.500H853M847.500 399V410M1003 290.500H1012M1006.500 286V296M1095 314.500H1106M1100.500 309V320M1241 321.500H1251M1246.500 317V326M1275 382.500H1285M1280.500 377V388M1049 516.500H1059M1054.500 511V522M1177 525.500H1187M1182.500 520V531M690 465.500H701M695.500 460V471M810 535.500H821M815.500 531V541" />
        </g>
        <g fill="#a5a5a5" fontFamily="Roboto, sans-serif" fontWeight="300" fontSize="16">
            <text x="632" y="329">R3</text>
            <text x="838" y="389">IC1</text>
            <text x="814" y="535">R1</text>
            <text x="1025" y="529">CN1</text>
            <text transform="translate(1017 310) rotate(-90)">R2</text>
            <text transform="translate(1280 383) rotate(-90)">CN2</text>
            <text transform="translate(1181 524) rotate(-90)">SV1</text>
            <text transform="translate(694 465) rotate(-90)">SV2</text>
            <text transform="translate(859 475) rotate(-90)">TINY11LP</text>
            <text transform="translate(716 477) rotate(-90)">1</text>
            <text x="1109" y="314" fill="#2b9bd0">1</text>
            <text transform="translate(1181 434) rotate(-90)" fill="#2b9bd0">6</text>
            <text transform="translate(1181 555) rotate(-90)" fill="#2b9bd0">1</text>
        </g>
        <g fill="#b1b841" fontFamily="Liberation Sans, sans-serif" fontSize="10" textAnchor="middle">
            {nets.map(([name, x, y, angle = 0]) => (
                <text key={`${x}-${y}`} transform={`translate(${x} ${y}) rotate(${angle})`} y="4">{name}</text>
            ))}
        </g>
    </svg>
);

const Tool = ({ id, ...rest }) => (
    <ToolButton aria-label={id.replace('*', '')} $menu={id.endsWith('*')} {...rest}>
        <Icon name={id.replace('*', '')} />
    </ToolButton>
);

export default function App() {
    const [command, setCommand] = useState('');

    return (
        <Window>
            <GlobalStyle />
            <TitleBar>
                <Icon name="brd" size={16} />
                <h1>2 Board - C:\Users\Kenneth Murerwa\Documents\EAGLE\projects\bramwel\bramwel.brd - EAGLE 9.4.2 education</h1>
                {['min', 'restore', 'close'].map((id) => (
                    <CaptionButton key={id} aria-label={id}><Icon name={id} /></CaptionButton>
                ))}
            </TitleBar>
            <MenuBar>
                {menus.map((item) => <button key={item}>{item}</button>)}
            </MenuBar>
            <ToolBar>
                <Grip />
                {mainTools.map((group) => (
                    <React.Fragment key={group[0]}>
                        {group.map((id) => <Tool key={id} id={id} />)}
                        <Divider />
                    </React.Fragment>
                ))}
                <Divider />
                <Tool id="help" />
                <Divider $gap="0 0 7px" />
                <Divider $gap="3px" />
                <LinkButton><Icon name="chain" size={16} />{'DESIGN\nLINK'}</LinkButton>
                <LinkButton><Icon name="quote" size={16} />{'PCB\nQUOTE'}</LinkButton>
            </ToolBar>
            <ToolBar $light>
                <Grip />
                <Narrow>
                    <Tool id="layers*" $size="31px" />
                    <Tool id="grid*" $size="31px" />
                    <Tool id="filter" $size="31px" $on />
                </Narrow>
                <Divider />
                <Field htmlFor="layer">Layer:</Field>
                <SelectBox $width="141px">
                    <Swatch $color="#0578af" $size="20px" />
                    <select id="layer"><option>16 Bottom</option></select>
                </SelectBox>
                <Field htmlFor="angle">Angle:</Field>
                <SelectBox $width="51px">
                    <select id="angle"><option>0</option></select>
                </SelectBox>
                <Divider $gap="5px 0 8px" />
                <Narrow>
                    <Tool id="abc" $size="31px" $on />
                    <Tool id="abcFlip" $size="31px" />
                </Narrow>
                <Divider $gap="5px" />
                <Narrow>
                    <Tool id="quadRight" $size="31px" $on />
                    <Tool id="quadLeft" $size="31px" />
                </Narrow>
                <Divider $gap="5px" />
                <Narrow>
                    <Tool id="angle" $size="31px" $on />
                    <Tool id="angleOff" $size="31px" />
                    <Tool id="snap" $size="31px" />
                </Narrow>
            </ToolBar>
            <Workspace>
                <Rail>
                    <RailGrip />
                    {railTools.map((group, i) => (
                        <RailGroup key={group[0]} $last={i === railTools.length - 1}>
                            {group.map((id) => (id ? <Tool key={id} id={id} $size="29px" $on={id === 'move'} /> : null))}
                        </RailGroup>
                    ))}
                    <Narrow>
                        <Tool id="more" $size="54px" />
                    </Narrow>
                </Rail>
                <Panel>
                    <Tabs>
                        <Tab>Design Manager</Tab>
                        <Tab>Inspector</Tab>
                        <Tab $active>Selection Filter</Tab>
                    </Tabs>
                    <h2>Types</h2>
                    <ListBox $height="151px">
                        <ul>
                            {types.map((type) => (
                                <SelectedRow key={type}><Icon name={`t${type}`} size={16} />{type}</SelectedRow>
                            ))}
                        </ul>
                        <ListScroll $thumb="79px"><span /></ListScroll>
                    </ListBox>
                    <h2>Layers</h2>
                    <ListBox $height="82px" $gap="5px">
                        <ul>
                            {presets.map((preset) => <PresetRow key={preset}>{preset}</PresetRow>)}
                        </ul>
                    </ListBox>
                    <ListBox>
                        <ul>
                            {layers.map(([name, color]) => (
                                <SelectedRow key={name}><Swatch $color={color} />{name}</SelectedRow>
                            ))}
                        </ul>
                        <ListScroll $thumb="30px"><span /></ListScroll>
                    </ListBox>
                    <ResetButton>Reset</ResetButton>
                </Panel>
                <Splitter />
                <Editor>
                    <CommandRow>
                        <label htmlFor="command">50 mil (2950 1650)</label>
                        <CommandBox>
                            <input id="command" value={command} onChange={(e) => setCommand(e.target.value)} />
                        </CommandBox>
                    </CommandRow>
                    <Canvas>
                        <Board />
                        <SideTabs>
                            <SideTab $top="7px"><Icon name="chip" size={18} /><span>MANUFACTURING</span></SideTab>
                            <SideTab $top="18px"><Icon name="fusion" size={18} /><span>FUSION 360</span></SideTab>
                            <SideTab $top="18px"><Icon name="fusion" size={18} /><span>FUSION TEAM</span></SideTab>
                        </SideTabs>
                    </Canvas>
                    <ScrollTrack $vertical><span /></ScrollTrack>
                    <ScrollTrack><span /></ScrollTrack>
                </Editor>
            </Workspace>
            <StatusBar>
                'C:\Users\Kenneth Murerwa\Documents\EAGLE\projects\bramwel\bramwel.brd' saved. Left-click to select object to move (Ctrl+right-click to move group)
                <span className='connection'><Icon name="power" size={22} /></span>
            </StatusBar>
            <TaskBar>
                {tasks.map(([id, state]) => (
                    <TaskButton key={id} aria-label={id} $open={state === 'open'} $active={state === 'active'}>
                        <Icon name={id} />
                    </TaskButton>
                ))}
                <Tray>
                    <Icon name="up" size={20} />
                    <Icon name="battery" size={20} />
                    <Icon name="wifi" size={18} />
                    <Icon name="sound" size={18} />
                    <span className='lang'>ENG</span>
                    <div className='clock'>13:34<br />10-Jun-19</div>
                    <Icon name="notes" />
                </Tray>
            </TaskBar>
        </Window>
    );
}
